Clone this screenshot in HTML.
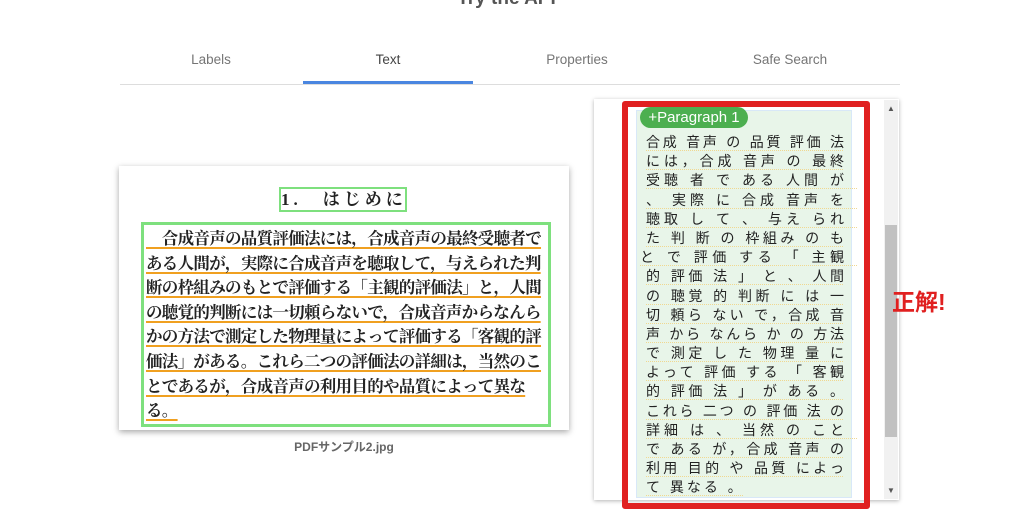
<!DOCTYPE html>
<html><head><meta charset="utf-8"><style>
body{margin:0;width:1013px;height:517px;background:#fff;position:relative;overflow:hidden;font-family:"Liberation Sans","Noto Sans CJK JP",sans-serif}
.a{position:absolute}
.tab{position:absolute;top:52px;font-size:13.5px;color:#757575;text-align:center;width:170px}
.jp{font-family:"Liberation Serif","Noto Serif CJK SC","Noto Sans CJK JP",serif;font-weight:bold;color:#222}
.pl{height:24.6px;line-height:24px;font-size:16.5px;white-space:nowrap;letter-spacing:-0.7px;text-decoration:underline;text-decoration-color:#f0a020;text-decoration-thickness:2px;text-underline-offset:3px}
.rl{height:19.2px;line-height:19.2px;font-size:14px;color:#222;text-align:justify;text-align-last:justify;white-space:nowrap;text-decoration:underline dotted #f0d890;text-decoration-thickness:1px;text-underline-offset:3px}
</style></head><body>
<div class="a" style="left:0;width:1013px;top:-12px;text-align:center;font-size:19px;font-weight:bold;color:#555">Try the API</div>
<div class="tab" style="left:126px">Labels</div>
<div class="tab" style="left:303px;color:#444">Text</div>
<div class="tab" style="left:492px">Properties</div>
<div class="tab" style="left:705px">Safe Search</div>
<div class="a" style="left:120px;top:84px;width:780px;height:1px;background:#ddd"></div>
<div class="a" style="left:303px;top:81px;width:170px;height:3px;background:#4a86e0"></div>

<div class="a" style="left:119px;top:166px;width:450px;height:264px;background:#fff;box-shadow:0 2px 6px rgba(0,0,0,.35)"></div>
<div class="a jp" style="left:279px;top:187px;width:124px;height:21px;border:2px solid #7ee07e;font-size:17px;line-height:21px;letter-spacing:4px;text-align:center;white-space:nowrap">1.　はじめに</div>
<div class="a jp" style="left:141px;top:222px;width:402px;height:197px;border:3px solid #7ee07e;padding:2px 0 0 2px;overflow:hidden">
<div class="pl">　合成音声の品質評価法には，合成音声の最終受聴者で</div>
<div class="pl">ある人間が，実際に合成音声を聴取して，与えられた判</div>
<div class="pl">断の枠組みのもとで評価する「主観的評価法」と，人間</div>
<div class="pl">の聴覚的判断には一切頼らないで，合成音声からなんら</div>
<div class="pl">かの方法で測定した物理量によって評価する「客観的評</div>
<div class="pl">価法」がある。これら二つの評価法の詳細は，当然のこ</div>
<div class="pl">とであるが，合成音声の利用目的や品質によって異な</div>
<div class="pl">る。</div>
</div>
<div class="a" style="left:119px;top:438px;width:450px;text-align:center;font-size:12px;font-weight:bold;color:#666">PDFサンプル2.jpg</div>

<div class="a" style="left:594px;top:99px;width:305px;height:401px;box-shadow:0 1px 4px rgba(0,0,0,.3);background:#fff"></div>
<div class="a" style="left:884px;top:100px;width:14px;height:399px;background:#f1f1f1"></div>
<div class="a" style="left:885px;top:225px;width:12px;height:212px;background:#c1c1c1"></div>
<div class="a" style="left:887px;top:104px;font-size:8px;color:#555">▲</div>
<div class="a" style="left:887px;top:486px;font-size:8px;color:#555">▼</div>
<div class="a" style="left:636px;top:110px;width:214px;height:386px;background:#e8f5e9;border:1px solid #d8e8f8"></div>
<div class="a" style="left:640px;top:107px;width:108px;height:21px;border-radius:11px;background:#4caf50;color:#fff;font-size:15px;line-height:21px;text-align:center">+Paragraph 1</div>
<div class="a" style="left:646px;top:133px;width:198px">
<div class="rl">合成 音声 の 品質 評価 法</div>
<div class="rl">には，合成 音声 の 最終</div>
<div class="rl">受聴 者 で ある 人間 が　</div>
<div class="rl">、 実際 に 合成 音声 を　</div>
<div class="rl">聴取 し て 、 与え られ　</div>
<div class="rl">た 判 断 の 枠組み の も</div>
<div class="rl" style="margin-left:-6px">と で 評価 する 「 主観　</div>
<div class="rl">的 評価 法 」 と 、 人間</div>
<div class="rl">の 聴覚 的 判断 に は 一</div>
<div class="rl">切 頼ら ない で，合成 音</div>
<div class="rl">声 から なんら か の 方法</div>
<div class="rl">で 測定 し た 物理 量 に</div>
<div class="rl">よって 評価 する 「 客観</div>
<div class="rl">的 評価 法 」 が ある 。</div>
<div class="rl">これら 二つ の 評価 法 の</div>
<div class="rl">詳細 は 、 当然 の こと　</div>
<div class="rl">で ある が，合成 音声 の</div>
<div class="rl">利用 目的 や 品質 によっ</div>
<div class="rl" style="text-align-last:left;letter-spacing:3px">て 異なる 。</div>
</div>
<div class="a" style="left:622px;top:101px;width:236px;height:396px;border:6px solid #e02020;border-radius:3px"></div>
<div class="a" style="left:892px;top:283px;font-size:23px;font-weight:bold;color:#e02020">正解!</div>
</body></html>
